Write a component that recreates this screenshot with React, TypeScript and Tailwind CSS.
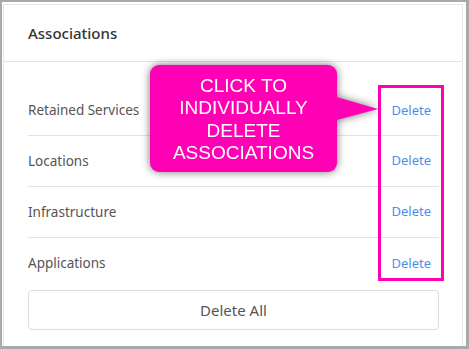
import React from "react";

const rows = ["Retained Services", "Locations", "Infrastructure", "Applications"];

export default function App() {
  return (
    <div className="relative w-[469px] h-[349px] bg-[#a9a9a9] pl-[2px] pt-[2px] pr-[3px] pb-[3px]" style={{ fontFamily: '"Noto Sans", "Open Sans", sans-serif' }}>
      <div className="w-full h-full bg-white pl-[1px] pt-[2px] pr-[3px] pb-0">
        <div className="h-full border border-[#e6e6e6] border-b-0 bg-white flex flex-col">
          <div className="h-[57px] flex items-center pl-[24px] border-b border-[#e3e3e3]">
            <span className="text-[15px] text-[#333] font-medium">Associations</span>
          </div>
          <div className="px-[24px] pr-[23px] flex flex-col">
            {rows.map((r, i) => (
              <div
                key={r}
                className={`flex items-center justify-between ${i === 0 ? "h-[74px] pt-[24px]" : "h-[51px]"} ${i < 3 ? "border-b border-[#e3e3e3]" : ""}`}
              >
                <span className="text-[13.5px] text-[#555]">{r}</span>
                <span className="text-[13px] text-[#4a8ee8] mr-[8px]">Delete</span>
              </div>
            ))}
          </div>
          <div className="px-[24px] pr-[23px] mt-[1px]">
            <div className="h-[40px] border border-[#dcdcdc] rounded-[4px] flex items-center justify-center text-[15px] text-[#555]">
              Delete All
            </div>
          </div>
        </div>
      </div>

      {/* magenta highlight box */}
      <div className="absolute left-[378px] top-[85px] w-[66px] h-[196px] border-[3px] border-[#ff00b4]" />

      {/* callout */}
      <div className="absolute left-[150px] top-[65px]" style={{ filter: "drop-shadow(0 0 4px rgba(0,0,0,0.55))" }}>
        <div className="relative">
          <div className="w-[187px] h-[107px] rounded-[9px] bg-[#ff00b4] flex flex-col items-center justify-center pt-[2px] text-white text-[19px] leading-[22.5px] text-center" style={{ fontFamily: '"Liberation Sans", Arial, sans-serif' }}>
            <span>CLICK TO</span>
            <span>INDIVIDUALLY</span>
            <span>DELETE</span>
            <span>ASSOCIATIONS</span>
          </div>
          <svg className="absolute left-[183px] top-[28px]" width="48" height="30" viewBox="0 0 48 30">
            <polygon points="0,3 45,16 0,28" fill="#ff00b4" />
          </svg>
        </div>
      </div>
    </div>
  );
}
